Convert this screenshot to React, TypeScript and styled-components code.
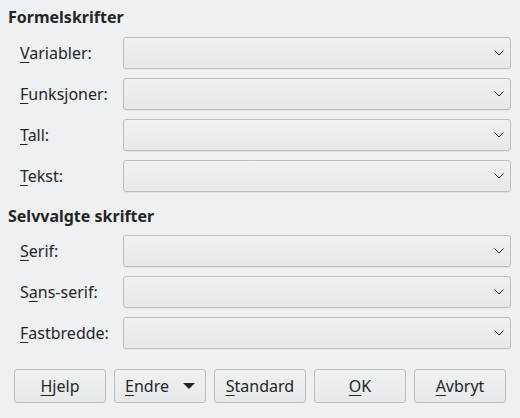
import React from "react";
import styled, { createGlobalStyle } from "styled-components";

const Global = createGlobalStyle`
  html, body { margin: 0; padding: 0; background: #eff0f1; }
  body { font-family: "Noto Sans", "Open Sans", sans-serif; color: #232627; }
`;

const Page = styled.div`
  width: 520px;
  height: 418px;
  box-sizing: border-box;
  display: flex;
  flex-direction: column;
  padding: 6px 9px 0 8px;
`;

const Header = styled.div`
  font-weight: bold;
  font-size: 16px;
  line-height: 22px;
  height: 22px;
`;

const Rows = styled.div<{ $pt: number; $mb: number }>`
  display: flex;
  flex-direction: column;
  gap: 9px;
  padding: ${(p) => p.$pt}px 0 0 12px;
  margin-bottom: ${(p) => p.$mb}px;
`;

const Row = styled.div`
  display: flex;
  align-items: center;
  height: 32px;
`;

const Label = styled.div`
  width: 103px;
  font-size: 16px;
  line-height: 22px;
  white-space: nowrap;
`;

const Mn = styled.span`
  text-decoration: underline;
  text-decoration-thickness: 1px;
  text-underline-offset: 3px;
`;

const Combo = styled.div`
  flex: 1;
  height: 32px;
  box-sizing: border-box;
  border: 1px solid #bcbdbe;
  border-radius: 3px;
  background: linear-gradient(#f0f1f1, #e7e8e9);
  box-shadow: 0 1px 0 rgba(0,0,0,0.04);
  display: flex;
  align-items: center;
  justify-content: flex-end;
  padding-right: 6px;
`;

const Buttons = styled.div`
  display: flex;
  gap: 8px;
  padding: 0 0 0 6px;
  margin-top: auto;
  margin-bottom: 15px;
`;

const Button = styled.div`
  width: 92px;
  height: 34px;
  box-sizing: border-box;
  border: 1px solid #bcbdbe;
  border-radius: 3px;
  background: linear-gradient(#f0f1f1, #e7e8e9);
  display: flex;
  align-items: center;
  justify-content: center;
  gap: 14px;
  font-size: 16px;
`;

const Chevron = () => (
  <svg width="10" height="6" viewBox="0 0 10 6">
    <path d="M0.5 0.5 L5 5 L9.5 0.5" fill="none" stroke="#232627" strokeWidth="1" />
  </svg>
);

const Triangle = () => (
  <svg width="12" height="6" viewBox="0 0 12 6">
    <path d="M0 0 H12 L6 6 Z" fill="#232627" />
  </svg>
);

const label = (mn: string, rest: string, pre = "") => (
  <>
    {pre}
    <Mn>{mn}</Mn>
    {rest}
  </>
);

const section1 = [
  label("V", "ariabler:"),
  label("F", "unksjoner:"),
  label("T", "all:"),
  label("T", "ekst:"),
];
const section2 = [
  label("S", "erif:"),
  label("a", "ns-serif:", "S"),
  label("F", "astbredde:"),
];

export default function App() {
  return (
    <Page>
      <Global />
      <Header>Formelskrifter</Header>
      <Rows $pt={9} $mb={13}>
        {section1.map((l, i) => (
          <Row key={i}>
            <Label>{l}</Label>
            <Combo><Chevron /></Combo>
          </Row>
        ))}
      </Rows>
      <Header>Selvvalgte skrifter</Header>
      <Rows $pt={8} $mb={0}>
        {section2.map((l, i) => (
          <Row key={i}>
            <Label>{l}</Label>
            <Combo><Chevron /></Combo>
          </Row>
        ))}
      </Rows>
      <Buttons>
        <Button><span><Mn>H</Mn>jelp</span></Button>
        <Button><span><Mn>E</Mn>ndre</span><Triangle /></Button>
        <Button><span><Mn>S</Mn>tandard</span></Button>
        <Button><span><Mn>O</Mn>K</span></Button>
        <Button><span><Mn>A</Mn>vbryt</span></Button>
      </Buttons>
    </Page>
  );
}
